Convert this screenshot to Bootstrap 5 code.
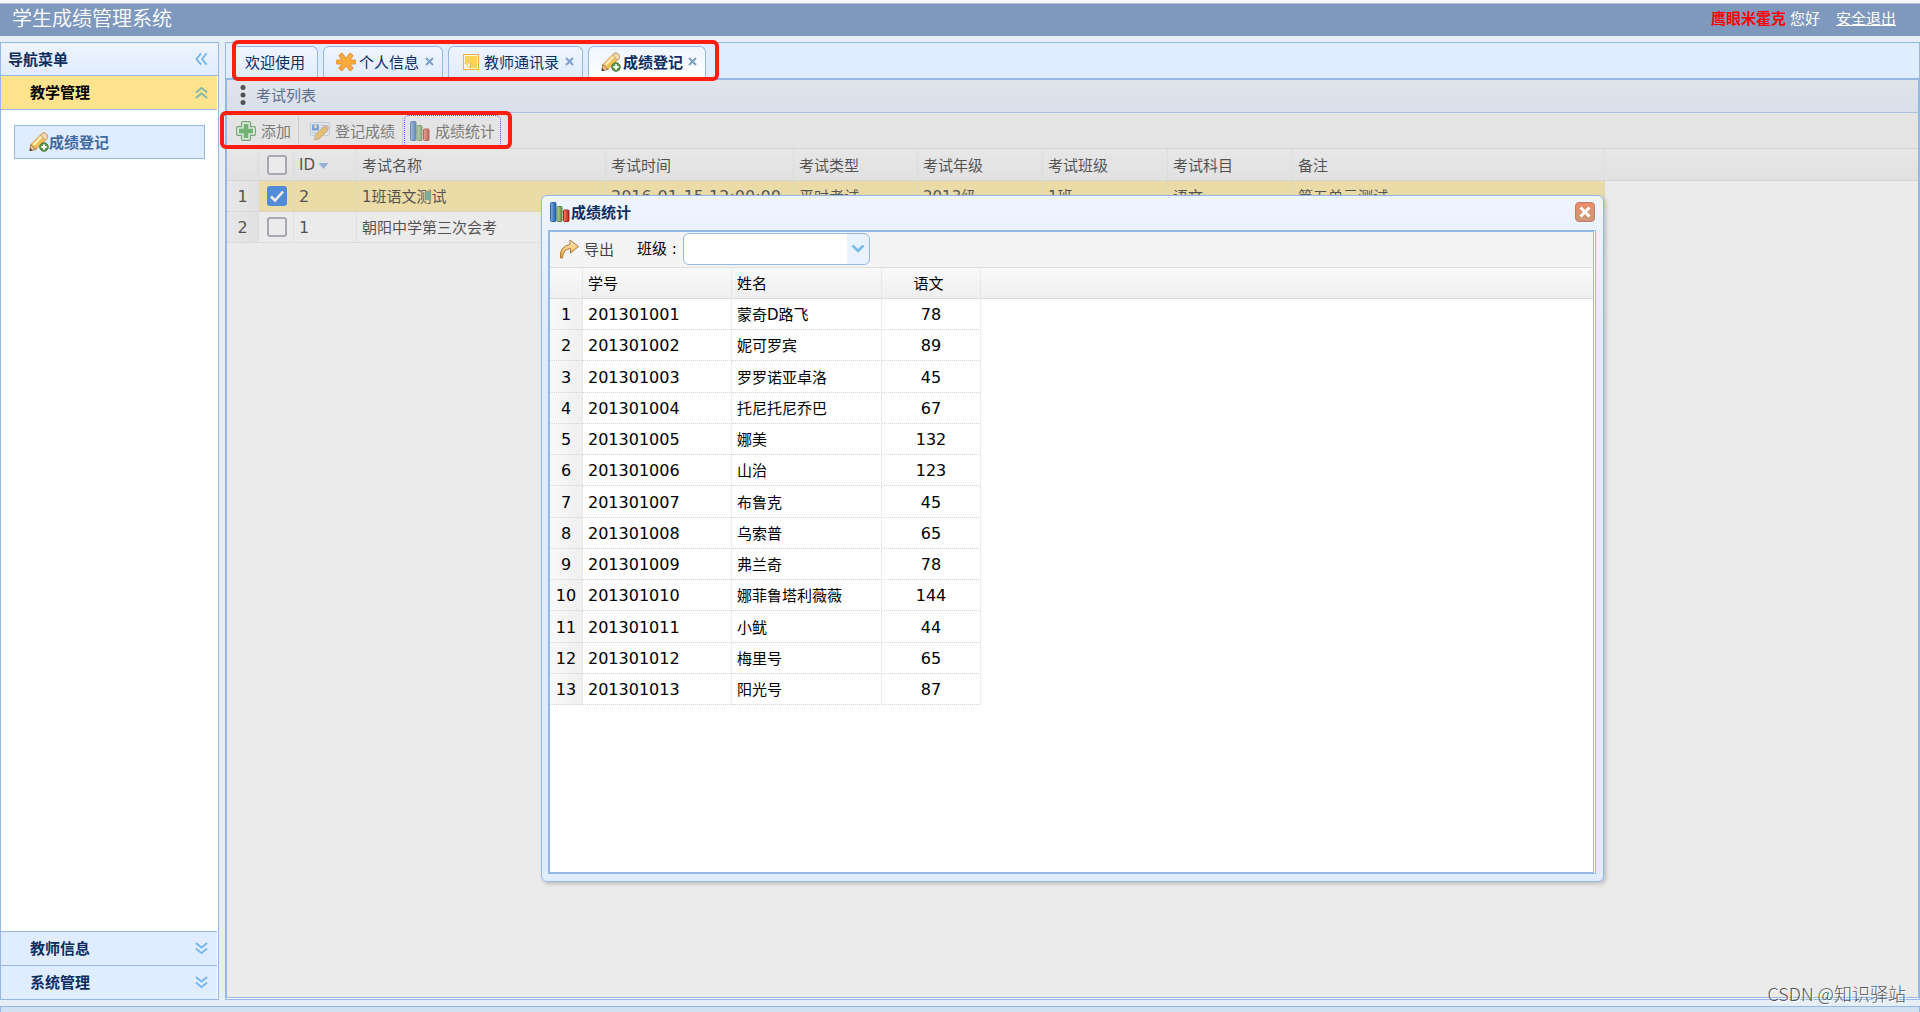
<!DOCTYPE html>
<html lang="zh-CN">
<head>
<meta charset="utf-8">
<meta name="viewport" content="width=device-width, initial-scale=1">
<title>学生成绩管理系统</title>
<link href="https://cdn.jsdelivr.net/npm/bootstrap@5.3.0/dist/css/bootstrap.min.css" rel="stylesheet">
<script src="https://cdn.jsdelivr.net/npm/bootstrap@5.3.0/dist/js/bootstrap.bundle.min.js"></script>
<style>
:root{--line:#95b8e7;--pale:#e0ecff;--ink:#0e2d5f}
body{font:15px/20px "Noto Sans CJK SC","Noto Sans",sans-serif;color:#000;background:#e6eef8}
button{font:inherit}
.topbar{border-top:3px solid #f6f8fb;background:#7f99be;box-shadow:inset 0 1px #b4bfcf;color:#fff;height:36px}
.topbar h1{font-size:20px;line-height:30px;font-weight:350}
.topbar h1,.topbar .user-box{margin-bottom:4px}
.who{color:#f00}
.workspace{margin:6px 0;gap:6px}
.sidebar{width:219px;border:1px solid var(--line);background:#fff}
.side-title{height:33px;background:linear-gradient(#eff5ff,#e0ecff);border-bottom:1px solid var(--line);color:var(--ink);padding:0 10px 0 7px}
.acc-btn{height:34px;background:var(--pale);border:0;border-top:1px solid var(--line);color:var(--ink);margin-right:1px;padding:0 9px 1px 29px}
.acc-btn.open{background:#ffe48d;border-top:0;border-bottom:1px solid var(--line);color:#000}
.side-links{padding:15px 13px}
.side-link{height:34px;background:var(--pale);border:1px solid var(--line);color:#416aa3;text-decoration:none;padding-left:14px}
.center{border:1px solid var(--line);background:#fff;min-width:0}
.tabs-strip{height:36px;background:var(--pale);border-bottom:1px solid var(--line);padding-left:6px;gap:5px}
.tab{height:32px;border:1px solid var(--line);border-bottom:0;border-radius:6px 6px 0 0;background:linear-gradient(#eff5ff,#e0ecff);color:var(--ink);padding:0 8px 2px 12px;gap:3px;white-space:nowrap}
.tab.plain{padding:0 12px 2px}
.tab.current{background:linear-gradient(#eff5ff,#fff);font-weight:700}
.tab.current{gap:2px}
.tab button{border:0;background:none;padding:0;margin-left:3px;line-height:0}
.work-panel{border:1px solid var(--line);margin-bottom:1px}
.panel-title{height:33px;background:linear-gradient(#eff5ff,#e0ecff);border-bottom:1px solid var(--line);color:var(--ink);padding:0 0 2px 13px;gap:10px}
.tools{height:36px;background:#f4f4f4;border-bottom:1px solid #ddd}
.main-tools{padding-left:3px;gap:1px}
.tool{border:1px solid transparent;background:none;color:#444;padding:0 5px;height:32px;gap:5px}
.tool.focused{border:1px dotted #00f;border-radius:5px}
.tsep{width:1px;height:30px;background:#ccc}
.grid{table-layout:fixed;border-collapse:separate;border-spacing:0;width:100%}
.grid th,.grid td{height:31px;padding:0 5px;font-weight:400;border-right:1px dotted #ddd;border-bottom:1px dotted #d4d4d4;white-space:nowrap;overflow:hidden}
.grid td{padding-top:2px}
.grid thead th{height:32px;border-bottom:1px solid #ddd;background:linear-gradient(#f9f9f9,#efefef)}
.grid th:last-child{border-right:0}
.grid td{font-family:"DejaVu Sans","Noto Sans CJK SC",sans-serif}
.grid .num{font-size:16px}
.grid .rn{text-align:center;padding:2px 0 0;font-size:16px;background:linear-gradient(90deg,#f9f9f9,#efefef)}
.latin{font-family:"DejaVu Sans",sans-serif}
.grid .picked td:not(.rn){background:#ffe48d}
.grid .pick{padding:0 5px 0 7px}
.tick{appearance:none;width:20px;height:20px;border:2px solid #8f8f9d;border-radius:3px;background:#fff;display:block;margin:0 auto}
.tick:checked{border-color:#0060df;background:#0060df url("data:image/svg+xml,%3Csvg xmlns='http://www.w3.org/2000/svg' viewBox='0 0 16 16'%3E%3Cpath d='M2 8.5l4 4 8-9' fill='none' stroke='white' stroke-width='2.6'/%3E%3C/svg%3E") center/16px}
.veil{position:absolute;inset:0;background:#ccc;opacity:.4}
.footer-strip{height:6px;border:1px solid var(--line);border-bottom:0;background:#d2e0f2}
.win{position:absolute;left:541px;top:195px;width:1063px;height:687px;border:1px solid var(--line);border-radius:6px;background:linear-gradient(#eff5ff,#e0ecff 20%);box-shadow:2px 2px 4px #bbb;padding:0 7px 7px 6px}
.win-title{height:34px;color:var(--ink);padding:0 1px 2px 2px;gap:1px}
.win-close{width:20px;height:20px;line-height:0}
.win-body{border:2px solid var(--line);border-right:3px double var(--line);background:#fff}
.win-tools{padding:0 0 2px 3px}
.class-pick{gap:6px;margin-left:17px}
.class-box{width:187px;height:32px}
.class-box select{appearance:none;width:100%;height:100%;border:1px solid var(--line);border-radius:6px;background:linear-gradient(90deg,#fff 163px,#eaf2ff 163px)}
.class-box svg{position:absolute;right:5px;top:11px;pointer-events:none}
.scores thead th{height:31px}
.scores .subject{text-align:center;padding-right:10px}
.scores tbody tr:nth-child(4n+3) td{height:32px}
.frame{position:absolute;border:4px solid #ff1e0f;border-radius:6px;pointer-events:none}
.frame-tabs{left:232px;top:40px;width:487px;height:41px}
.frame-tools{left:220px;top:111px;width:292px;height:38px}
.stamp{position:absolute;right:14px;bottom:6px;font:300 18px/26px "Noto Sans CJK SC",sans-serif;color:#555;text-shadow:1px 1px #fff}
</style>
</head>
<body class="d-flex flex-column position-relative min-vh-100">
<svg width="0" height="0" class="position-absolute">
<defs>
<linearGradient id="gb"><stop stop-color="#7fb4ee"/><stop offset="1" stop-color="#1d57a5"/></linearGradient>
<linearGradient id="gg"><stop stop-color="#c0dfa6"/><stop offset="1" stop-color="#5b8b3e"/></linearGradient>
<linearGradient id="gr"><stop stop-color="#f58a6c"/><stop offset="1" stop-color="#b91d10"/></linearGradient>
<linearGradient id="go" x2="0" y2="1"><stop stop-color="#fff0bd"/><stop offset="1" stop-color="#f0a43a"/></linearGradient>
<linearGradient id="gc" x2="0" y2="1"><stop stop-color="#ee8a68"/><stop offset="1" stop-color="#c99a78"/></linearGradient>
</defs>
<symbol id="chart" viewBox="0 0 20 20"><rect x=".5" y=".5" width="5.500" height="19" rx="1" fill="url(#gb)" stroke="#2f62a6"/><rect x="7" y="4.500" width="5" height="15" rx="1" fill="url(#gg)" stroke="#5a8440"/><rect x="13.500" y="8" width="5.500" height="11.500" rx="1" fill="url(#gr)" stroke="#a02a1a"/></symbol>
<symbol id="pencil" viewBox="0 0 20 20"><path d="M1.500 13L12.500 2q2-2 4-.5l1.500 1.500q1.500 2-.5 4L7 17z" fill="#f4bf55" stroke="#d09a4e"/><path d="M4.500 13L13.500 3.500" stroke="#fff1b8" stroke-width="2.400"/><path d="M11.500 3L13 1.700q2-1.500 3.700-.2l1.500 1.500q1.300 1.900-.2 3.700l-1.500 1.500z" fill="#f3d9b5" stroke="#c39d70"/><path d="M.8 18.700l.9-6 5.500 4.800z" fill="#e8c48e" stroke="#a98250"/><path d="M.6 19l.6-3 2.400 2.400z" fill="#4b3823"/><circle cx="15" cy="15" r="4.300" fill="#5b9747" stroke="#4d7f3d"/><path d="M15 12.300v5.400M12.300 15h5.400" stroke="#fff" stroke-width="1.800"/></symbol>
<symbol id="cross" viewBox="0 0 9 9"><path d="M1 1l7 7M8 1L1 8" stroke="#7fa0cf" stroke-width="2"/></symbol>
<symbol id="chev2" viewBox="0 0 14 14"><path d="M1 1l6 5 6-5M1 7l6 5 6-5" fill="none" stroke="#74b6f0" stroke-width="2"/></symbol>
</svg>

<header class="topbar d-flex justify-content-between align-items-center px-2 flex-shrink-0">
  <h1 class="mt-0 ms-1">学生成绩管理系统</h1>
  <div class="user-box d-flex me-3"><b class="who me-1">鹰眼米霍克</b><span class="me-3">您好</span><a href="#" class="text-white">安全退出</a></div>
</header>

<div class="workspace d-flex flex-grow-1">
  <nav class="sidebar d-flex flex-column flex-shrink-0">
    <div class="side-title d-flex align-items-center justify-content-between"><b>导航菜单</b>
      <svg width="13" height="14" viewBox="0 0 14 14"><path d="M6.500 1l-5 6 5 6M12.500 1l-5 6 5 6" fill="none" stroke="#74b6f0" stroke-width="2"/></svg></div>
    <button class="acc-btn open d-flex align-items-center justify-content-between"><b>教学管理</b><svg width="13" height="13" viewBox="0 0 14 14"><path d="M1 7l6-5 6 5M1 13l6-5 6 5" fill="none" stroke="#7fb6ae" stroke-width="2"/></svg></button>
    <div class="side-links flex-grow-1"><a href="#" class="side-link d-flex align-items-center"><svg width="20" height="20"><use href="#pencil"/></svg><b>成绩登记</b></a></div>
    <button class="acc-btn d-flex align-items-center justify-content-between"><b>教师信息</b><svg width="13" height="13"><use href="#chev2"/></svg></button>
    <button class="acc-btn d-flex align-items-center justify-content-between"><b>系统管理</b><svg width="13" height="13"><use href="#chev2"/></svg></button>
  </nav>

  <main class="center d-flex flex-column flex-grow-1">
    <div class="tabs-strip d-flex align-items-end flex-shrink-0">
      <div class="tab plain d-flex align-items-center">欢迎使用</div>
      <div class="tab d-flex align-items-center"><svg width="20" height="20" viewBox="0 0 20 20"><path d="M.7 8h5.200L2.700 3.600 6 .9l4 5.300L14 .9l3.300 2.700L14.100 8h5.200v4h-5.200l3.200 4.400-3.300 2.700-4-5.300-4 5.300-3.300-2.700L5.900 12H.7z" fill="#fbaa3d" stroke="#e79433" stroke-linejoin="round"/></svg>个人信息<button aria-label="关闭"><svg width="9" height="9"><use href="#cross"/></svg></button></div>
      <div class="tab d-flex align-items-center"><svg width="20" height="20" viewBox="0 0 20 20"><rect x="2.500" y="2.500" width="15" height="15" fill="#fff6d5" stroke="#eaae4a"/><path d="M4 4h12v12H9.500L4 11z" fill="#f9d45c"/><path d="M4 11h5.500v5z" fill="#fffbe8" stroke="#e9b958"/></svg>教师通讯录<button aria-label="关闭"><svg width="9" height="9"><use href="#cross"/></svg></button></div>
      <div class="tab current d-flex align-items-center"><svg width="20" height="20"><use href="#pencil"/></svg>成绩登记<button aria-label="关闭"><svg width="9" height="9"><use href="#cross"/></svg></button></div>
    </div>
    <section class="work-panel flex-grow-1 position-relative">
      <div class="panel-title d-flex align-items-center"><svg width="6" height="20" viewBox="0 0 6 20"><circle cx="3" cy="2.500" r="2.500"/><circle cx="3" cy="10" r="2.500"/><circle cx="3" cy="17.500" r="2.500"/></svg><span>考试列表</span></div>
      <div class="tools main-tools d-flex align-items-center">
        <button class="tool d-flex align-items-center"><svg width="20" height="20" viewBox="0 0 20 20"><path d="M6.500.7h7l1 1v4h4l1 1v6.600l-1 1h-4v4l-1 1h-7l-1-1v-4h-4l-1-1V6.700l1-1h4v-4z" fill="#e9f6e7" stroke="#3d8e40" stroke-width="1.200"/><path d="M7.700 3h4.600v4.700H17v4.600h-4.700V17H7.700v-4.700H3V7.700h4.700z" fill="#2fa336"/></svg>添加</button>
        <span class="tsep"></span>
        <button class="tool d-flex align-items-center ms-1"><svg width="20" height="20" viewBox="0 0 20 20"><rect x=".5" y="1.500" width="19" height="13" rx="1" fill="#eaf3fd" stroke="#b4cbe6"/><rect x="2" y="3.500" width="7" height="6" fill="#4187d4"/><circle cx="5.500" cy="5.500" r="1.600" fill="#f7dcae"/><path d="M11 4.500h6M11 7h6" stroke="#8bb5e2"/><path d="M2 12h6" stroke="#9dbde0"/><path d="M4.500 19l1-5L14 5.500l4 3.500-9 9z" fill="#f4b83f" stroke="#c98a35"/><path d="M14 5.500l1-1q1.500-1 3 .5t.8 3l-.8 1z" fill="#e99a7a"/><path d="M4.500 19l1-5 3.500 4z" fill="#d9b184"/></svg>登记成绩</button>
        <span class="tsep"></span>
        <button class="tool focused d-flex align-items-center"><svg width="20" height="20"><use href="#chart"/></svg>成绩统计</button>
      </div>
      <table class="grid">
        <colgroup><col style="width:32px"><col style="width:35px"><col style="width:63px"><col style="width:249px"><col style="width:188px"><col style="width:124px"><col style="width:125px"><col style="width:125px"><col style="width:125px"><col style="width:312px"><col></colgroup>
        <thead><tr><th></th><th class="pick"><input type="checkbox" class="tick" aria-label="全选"></th><th><span class="latin">ID</span> <svg width="11" height="6" viewBox="0 0 10 6"><path d="M0 0h10L5 6z" fill="#6e9bdc"/></svg></th><th>考试名称</th><th>考试时间</th><th>考试类型</th><th>考试年级</th><th>考试班级</th><th>考试科目</th><th>备注</th><th></th></tr></thead>
        <tbody>
          <tr class="picked"><td class="rn">1</td><td class="pick"><input type="checkbox" class="tick" checked aria-label="选择 2"></td><td class="num">2</td><td>1班语文测试</td><td class="num">2016-01-15 12:00:00</td><td>平时考试</td><td>2013级</td><td>1班</td><td>语文</td><td>第五单元测试</td></tr>
          <tr><td class="rn">2</td><td class="pick"><input type="checkbox" class="tick" aria-label="选择 1"></td><td class="num">1</td><td>朝阳中学第三次会考</td><td></td><td></td><td></td><td></td><td></td><td></td></tr>
        </tbody>
      </table>
      <div class="veil"></div>
    </section>
  </main>
</div>
<footer class="footer-strip"></footer>

<section class="win d-flex flex-column" role="dialog" aria-labelledby="winTitle">
  <div class="win-title d-flex align-items-center">
    <svg width="20" height="20"><use href="#chart"/></svg><b id="winTitle">成绩统计</b>
    <button class="win-close border-0 bg-transparent p-0 ms-auto" aria-label="关闭"><svg width="20" height="20" viewBox="0 0 20 20"><rect x=".5" y=".5" width="19" height="19" rx="3.500" fill="url(#gc)" stroke="#c27c68"/><path d="M5.500 5.500l9 9M14.500 5.500l-9 9" stroke="#fff" stroke-width="3"/></svg></button>
  </div>
  <div class="win-body flex-grow-1">
    <div class="tools win-tools d-flex align-items-center">
      <button class="tool d-flex align-items-center"><svg width="20" height="20" viewBox="0 0 20 20"><path d="M1.500 19Q0 7.500 11 5.500V1L19.500 7.500 11.500 14v-4.500Q4 10 3.500 19z" fill="url(#go)" stroke="#a8793f"/></svg>导出</button>
      <div class="class-pick d-flex align-items-center">
        <label for="classSel">班级<span class="latin"> :</span></label>
        <div class="class-box position-relative"><select id="classSel"><option></option></select><svg width="14" height="9" viewBox="0 0 14 9"><path d="M1.500 1.500L7 7l5.500-5.500" fill="none" stroke="#78bdf0" stroke-width="2.600"/></svg></div>
      </div>
    </div>
    <table class="grid scores">
      <colgroup><col style="width:33px"><col style="width:149px"><col style="width:150px"><col style="width:99px"><col></colgroup>
      <thead><tr><th></th><th>学号</th><th>姓名</th><th class="subject">语文</th><th></th></tr></thead>
      <tbody>
        <tr><td class="rn">1</td><td class="num">201301001</td><td>蒙奇D路飞</td><td class="num text-center">78</td></tr>
        <tr><td class="rn">2</td><td class="num">201301002</td><td>妮可罗宾</td><td class="num text-center">89</td></tr>
        <tr><td class="rn">3</td><td class="num">201301003</td><td>罗罗诺亚卓洛</td><td class="num text-center">45</td></tr>
        <tr><td class="rn">4</td><td class="num">201301004</td><td>托尼托尼乔巴</td><td class="num text-center">67</td></tr>
        <tr><td class="rn">5</td><td class="num">201301005</td><td>娜美</td><td class="num text-center">132</td></tr>
        <tr><td class="rn">6</td><td class="num">201301006</td><td>山治</td><td class="num text-center">123</td></tr>
        <tr><td class="rn">7</td><td class="num">201301007</td><td>布鲁克</td><td class="num text-center">45</td></tr>
        <tr><td class="rn">8</td><td class="num">201301008</td><td>乌索普</td><td class="num text-center">65</td></tr>
        <tr><td class="rn">9</td><td class="num">201301009</td><td>弗兰奇</td><td class="num text-center">78</td></tr>
        <tr><td class="rn">10</td><td class="num">201301010</td><td>娜菲鲁塔利薇薇</td><td class="num text-center">144</td></tr>
        <tr><td class="rn">11</td><td class="num">201301011</td><td>小鱿</td><td class="num text-center">44</td></tr>
        <tr><td class="rn">12</td><td class="num">201301012</td><td>梅里号</td><td class="num text-center">65</td></tr>
        <tr><td class="rn">13</td><td class="num">201301013</td><td>阳光号</td><td class="num text-center">87</td></tr>
      </tbody>
    </table>
  </div>
</section>

<div class="frame frame-tabs"></div>
<div class="frame frame-tools"></div>
<div class="stamp">CSDN @知识驿站</div>
</body>
</html>
